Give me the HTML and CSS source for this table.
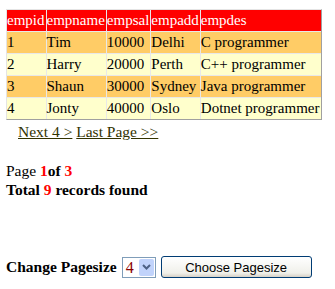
FILE: index.html
```html
<!DOCTYPE html>
<html>
<head>
<meta charset="utf-8">
<link rel="stylesheet" href="styles.css">
</head>
<body>
<div class="page">
  <table class="grid">
    <tr class="head"><td>empid</td><td>empname</td><td>empsal</td><td>empadd</td><td>empdes</td></tr>
    <tr class="odd"><td>1</td><td>Tim</td><td>10000</td><td>Delhi</td><td>C programmer</td></tr>
    <tr class="even"><td>2</td><td>Harry</td><td>20000</td><td>Perth</td><td>C++ programmer</td></tr>
    <tr class="odd"><td>3</td><td>Shaun</td><td>30000</td><td>Sydney</td><td>Java programmer</td></tr>
    <tr class="even"><td>4</td><td>Jonty</td><td>40000</td><td>Oslo</td><td>Dotnet programmer</td></tr>
  </table>
  <div class="pager"><a href="#">Next 4 &gt;</a> <a href="#">Last Page &gt;&gt;</a></div>
  <div class="info">
    <div>Page <b class="red">1</b><b>of</b> <b class="red">3</b></div>
    <div class="total">Total <span class="red">9</span> records found</div>
  </div>
  <div class="change">
    <span class="label">Change Pagesize</span>
    <span class="select"><span class="val">4</span><span class="arrow"><svg width="9" height="6" viewBox="0 0 9 6"><path d="M1 1 L4.5 4.5 L8 1" fill="none" stroke="#4d6185" stroke-width="2"/></svg></span></span>
    <button class="btn">Choose Pagesize</button>
  </div>
</div>
</body>
</html>
```
FILE: styles.css
```css
html, body { margin: 0; padding: 0; background: #fff; }
body { font-family: "Liberation Serif", "Times New Roman", serif; font-size: 15.5px; color: #000; }
.page { padding: 9px 0 0 6px; }
.grid {
  border-collapse: separate;
  border-spacing: 0;
  border-width: 1px;
  border-style: solid;
  border-color: #e4e4e4 #a0a0a0 #a0a0a0 #e4e4e4;
  font-size: 15px;
}
.grid td {
  padding: 0 1px 0 0;
  height: 21px;
  line-height: 21px;
  border: 1px solid #e8e8e8;
  border-width: 0 1px 1px 0;
  white-space: nowrap;
}
.grid td:last-child { border-right: 0; }
.grid tr:last-child td { border-bottom: 0; }
.head td { background: #ff0000; color: #fff; }
.odd td { background: #ffcc66; }
.even td { background: #ffffcc; }
.pager { padding: 2px 0 0 12px; line-height: 20px; }
.pager a { color: #333300; text-decoration: underline; }
.info { margin-top: 19px; line-height: 19px; }
.red { color: #ff0000; font-weight: bold; }
.total { font-weight: bold; }
.change { margin-top: 56px; display: flex; align-items: center; height: 24px; }
.label { font-weight: bold; }
.select {
  display: inline-flex; align-items: stretch;
  margin-left: 5px;
  width: 32px; height: 19px;
  border: 1px solid #7f9db9;
  background: #fff;
  box-sizing: content-box;
}
.val { flex: 1; color: #8b0000; font-family: "Liberation Serif", serif; font-size: 16px; line-height: 19px; padding-left: 3px; }
.arrow {
  width: 15px; margin: 1px; background: #c1d3fb; border-radius: 2px;
  display: flex; align-items: center; justify-content: center;
}
.btn {
  margin-left: 5px;
  width: 151px; height: 22px;
  border: 1px solid #003c74;
  border-radius: 3px;
  background: linear-gradient(#ffffff, #f0f0ea 80%, #d6d0c5);
  font-family: "Liberation Sans", Arial, sans-serif;
  font-size: 13px;
  color: #000;
  padding: 0;
}
```
